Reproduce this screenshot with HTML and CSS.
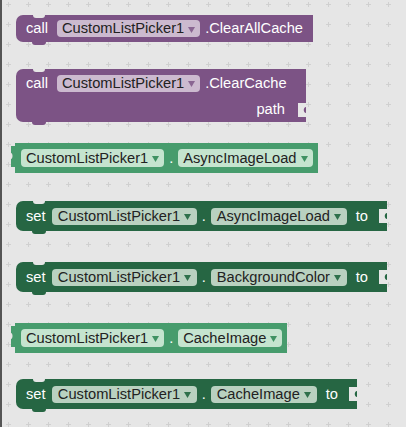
FILE: index.html
```html
<!DOCTYPE html>
<html lang="en">
<head>
    <meta charset="UTF-8">
    <meta name="viewport" content="width=device-width, initial-scale=1.0">
    <title>Blocks</title>
    <link rel="stylesheet" href="styles.css">
</head>
<body>
    <section class="workspace">
        <svg class="grid" xmlns="http://www.w3.org/2000/svg">
            <defs>
                <pattern id="cross" x="-4" y="-6" width="20" height="20" patternUnits="userSpaceOnUse">
                    <path d="M8 10.5H13M10.5 8V13" stroke="#d0d0d0" stroke-width="1"/>
                </pattern>
            </defs>
            <rect width="100%" height="100%" fill="url(#cross)"/>
        </svg>

        <div class="block stmt proc b1">
            <span class="word kw-call">call</span>
            <span class="pill pill-proc">CustomListPicker1<svg viewBox="0 0 7 6"><path d="M0 0H7L3.5 6Z"/></svg></span>
            <span class="word method">.ClearAllCache</span>
        </div>

        <div class="block stmt proc b2">
            <div class="row">
                <span class="word kw-call">call</span>
                <span class="pill pill-proc">CustomListPicker1<svg viewBox="0 0 7 6"><path d="M0 0H7L3.5 6Z"/></svg></span>
                <span class="word method">.ClearCache</span>
            </div>
            <div class="row row-arg">
                <span class="word arg">path</span>
                <svg class="socket" viewBox="0 0 8 14"><path d="M0 0H8V4C5 4 5 10 8 10V14H0Z"/></svg>
            </div>
        </div>

        <div class="block get b3">
            <svg class="tab" viewBox="0 0 6 21"><path d="M6 0H1V7C3 7 3 13 1 13V21H6Z"/></svg>
            <span class="pill pill-get">CustomListPicker1<svg viewBox="0 0 7 6"><path d="M0 0H7L3.5 6Z"/></svg></span>
            <span class="word dot">.</span>
            <span class="pill pill-get">AsyncImageLoad<svg viewBox="0 0 7 6"><path d="M0 0H7L3.5 6Z"/></svg></span>
        </div>

        <div class="block stmt set b4">
            <span class="word kw-set">set</span>
            <span class="pill pill-set">CustomListPicker1<svg viewBox="0 0 7 6"><path d="M0 0H7L3.5 6Z"/></svg></span>
            <span class="word dot">.</span>
            <span class="pill pill-set">AsyncImageLoad<svg viewBox="0 0 7 6"><path d="M0 0H7L3.5 6Z"/></svg></span>
            <span class="word kw-to">to</span>
            <svg class="socket" viewBox="0 0 8 14"><path d="M0 0H8V4C5 4 5 10 8 10V14H0Z"/></svg>
        </div>

        <div class="block stmt set b5">
            <span class="word kw-set">set</span>
            <span class="pill pill-set">CustomListPicker1<svg viewBox="0 0 7 6"><path d="M0 0H7L3.5 6Z"/></svg></span>
            <span class="word dot">.</span>
            <span class="pill pill-set">BackgroundColor<svg viewBox="0 0 7 6"><path d="M0 0H7L3.5 6Z"/></svg></span>
            <span class="word kw-to">to</span>
            <svg class="socket" viewBox="0 0 8 14"><path d="M0 0H8V4C5 4 5 10 8 10V14H0Z"/></svg>
        </div>

        <div class="block get b6">
            <svg class="tab" viewBox="0 0 6 21"><path d="M6 0H1V7C3 7 3 13 1 13V21H6Z"/></svg>
            <span class="pill pill-get">CustomListPicker1<svg viewBox="0 0 7 6"><path d="M0 0H7L3.5 6Z"/></svg></span>
            <span class="word dot">.</span>
            <span class="pill pill-get">CacheImage<svg viewBox="0 0 7 6"><path d="M0 0H7L3.5 6Z"/></svg></span>
        </div>

        <div class="block stmt set b7">
            <span class="word kw-set">set</span>
            <span class="pill pill-set">CustomListPicker1<svg viewBox="0 0 7 6"><path d="M0 0H7L3.5 6Z"/></svg></span>
            <span class="word dot">.</span>
            <span class="pill pill-set">CacheImage<svg viewBox="0 0 7 6"><path d="M0 0H7L3.5 6Z"/></svg></span>
            <span class="word kw-to">to</span>
            <svg class="socket" viewBox="0 0 8 14"><path d="M0 0H8V4C5 4 5 10 8 10V14H0Z"/></svg>
        </div>
    </section>
</body>
</html>
```

FILE: styles.css
```css
body {
    margin: 0;
    padding: 0;
    font-family: "Liberation Sans", Arial, sans-serif;
    font-size: 11pt;
}

.workspace {
    position: relative;
    box-sizing: border-box;
    height: 427px;
    padding-top: 15px;
    border-left: 2px solid #555;
    background-color: #e6e6e6;
    display: flex;
    flex-direction: column;
    align-items: flex-start;
    overflow: hidden;
}

.grid {
    position: absolute;
    left: 0;
    top: 0;
    width: 100%;
    height: 100%;
}

/* blocks */
.block {
    position: relative;
    display: flex;
    align-items: center;
    box-sizing: border-box;
    color: #fff;
    line-height: 17px;
    white-space: nowrap;
}

.stmt {
    margin-left: 14px;
    border-radius: 7px 0 0 7px;
}

/* previous / next notches */
.stmt::before {
    content: "";
    position: absolute;
    top: 0;
    left: 17px;
    width: 12px;
    height: 3px;
    background-color: #e6e6e6;
    border-radius: 0 0 6px 6px;
}

.stmt::after {
    content: "";
    position: absolute;
    bottom: -3px;
    left: 16px;
    width: 14px;
    height: 3px;
    background: inherit;
    border-radius: 0 0 7px 7px;
}

.proc {
    background-color: #7c5385;
}

.set {
    background-color: #266643;
    height: 30px;
    padding-left: 10px;
}

.get {
    background-color: #479c6d;
    height: 30px;
    margin-left: 13px;
    padding: 0 5px 0 6px;
}

.tab {
    position: absolute;
    left: -5px;
    top: 3px;
    width: 6px;
    height: 21px;
    fill: #479c6d;
}

.b1 {
    height: 27px;
    padding: 0 10px;
}

.b2 {
    margin-top: 27px;
    width: 290px;
    flex-direction: column;
    align-items: stretch;
}

.b2 .row {
    display: flex;
    align-items: center;
    height: 28px;
    padding-left: 10px;
}

.b2 .row-arg {
    height: 25px;
    justify-content: flex-end;
    padding-left: 0;
}

.b3 { margin-top: 21px; }
.b4 { margin-top: 28px; }
.b5 { margin-top: 31px; }
.b6 { margin-top: 31px; }
.b7 { margin-top: 26px; }

/* text parts */
.kw-call {
    margin-right: 9px;
}

.kw-set {
    margin-right: 6.5px;
}

.method {
    margin-left: 5px;
}

.dot {
    margin: 0 5px;
}

.kw-to {
    margin: 0 11px 0 9px;
}

.arg {
    margin-right: 13px;
}

.socket {
    width: 8px;
    height: 14px;
    fill: #e6e6e6;
}

/* dropdown fields */
.pill {
    display: flex;
    align-items: center;
    height: 17px;
    padding: 0 5px;
    border-radius: 4px;
    color: #222;
}

.pill svg {
    width: 7px;
    height: 6px;
    margin: 2px 0 0 4px;
}

.pill-proc {
    background-color: #ccbacf;
    fill: #8a6692;
}

.pill-get {
    background-color: #c5e4cf;
    height: 18px;
    fill: #3f9262;
}

.pill-set {
    background-color: #b9d1c0;
    fill: #2e704b;
    padding: 0 5.8px;
}
```
